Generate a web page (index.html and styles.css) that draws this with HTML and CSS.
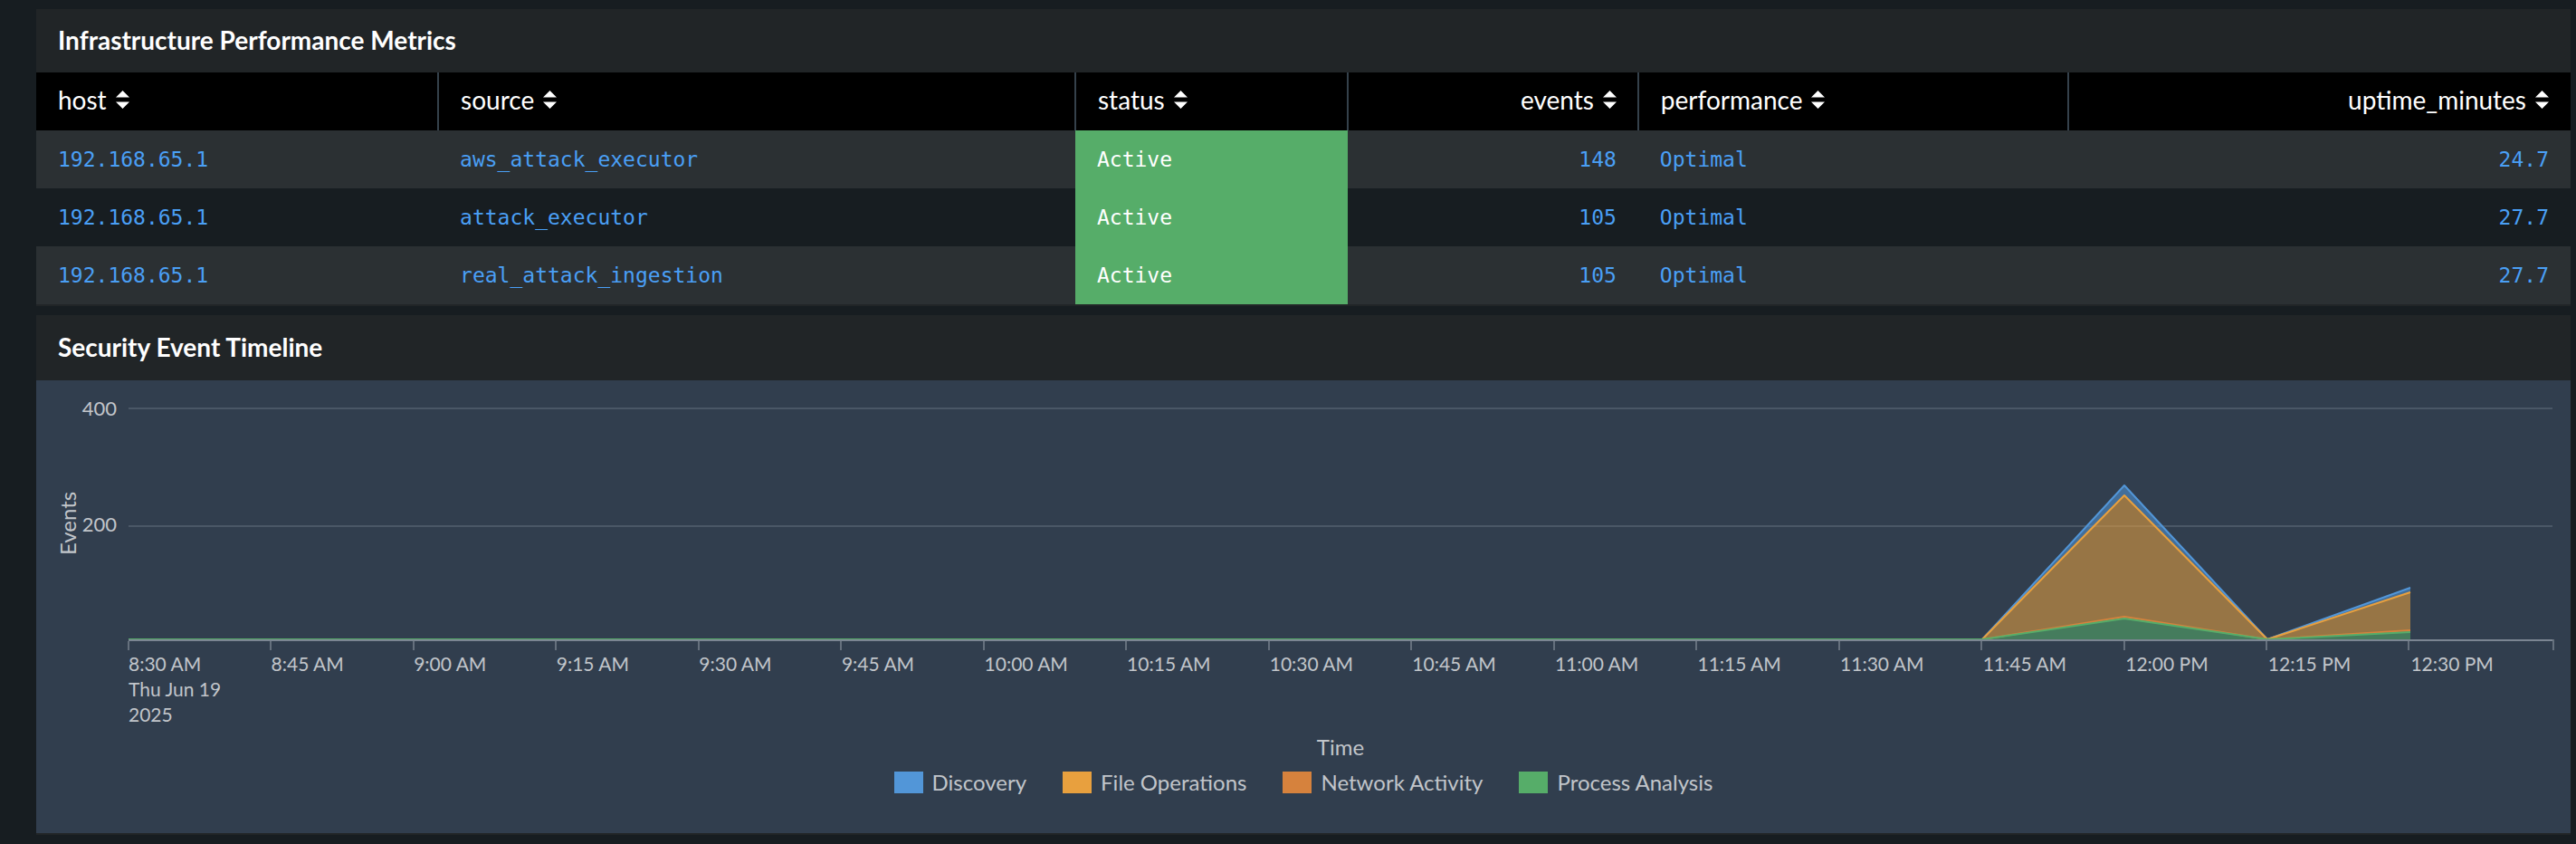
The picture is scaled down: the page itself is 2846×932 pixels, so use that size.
FILE: index.html
```html
<!DOCTYPE html>
<html lang="en">
<head>
<meta charset="utf-8">
<title>Infrastructure Performance Metrics</title>
<link rel="stylesheet" href="styles.css">
</head>
<body>
<svg class="defs" width="0" height="0" aria-hidden="true">
  <symbol id="sort" viewBox="0 0 15 20"><path d="M7.500 0 15 7.500H0zM7.500 20 0 12.500h15z" fill="currentColor"/></symbol>
</svg>
<main class="dashboard">
  <section class="panel">
    <h2 class="panel-title">Infrastructure Performance Metrics</h2>
    <table class="metrics">
      <colgroup><col class="c-host"><col class="c-source"><col class="c-status"><col class="c-events"><col class="c-perf"><col class="c-uptime"></colgroup>
      <thead>
        <tr>
          <th scope="col"><button type="button">host<svg class="sort"><use href="#sort"/></svg></button></th>
          <th scope="col"><button type="button">source<svg class="sort"><use href="#sort"/></svg></button></th>
          <th scope="col"><button type="button">status<svg class="sort"><use href="#sort"/></svg></button></th>
          <th scope="col" class="num"><button type="button">events<svg class="sort"><use href="#sort"/></svg></button></th>
          <th scope="col"><button type="button">performance<svg class="sort"><use href="#sort"/></svg></button></th>
          <th scope="col" class="num"><button type="button">uptime_minutes<svg class="sort"><use href="#sort"/></svg></button></th>
        </tr>
      </thead>
      <tbody>
        <tr><td>192.168.65.1</td><td>aws_attack_executor</td><td class="active">Active</td><td class="num">148</td><td>Optimal</td><td class="num">24.7</td></tr>
        <tr><td>192.168.65.1</td><td>attack_executor</td><td class="active">Active</td><td class="num">105</td><td>Optimal</td><td class="num">27.7</td></tr>
        <tr><td>192.168.65.1</td><td>real_attack_ingestion</td><td class="active">Active</td><td class="num">105</td><td>Optimal</td><td class="num">27.7</td></tr>
      </tbody>
    </table>
  </section>

  <section class="panel">
    <h2 class="panel-title panel-title-tall">Security Event Timeline</h2>
    <div class="chart">
      <div class="y-title">Events</div>
      <div class="y-labels"><span>400</span><span>200</span></div>
      <svg class="plot" viewBox="0 0 2680 268" preserveAspectRatio="none" role="img" aria-label="Events over time">
        <path class="grid" d="M1 1H2679M1 131H2679"/>
        <path class="fill discovery" d="M2049 256 2206 86 2364 256 2522 199V204L2364 256 2206 97z"/>
        <path class="fill file" d="M2049 256 2206 97 2364 256 2522 204V246L2364 256 2206 231z"/>
        <path class="fill network" d="M2049 256 2206 231 2364 256 2522 246V248L2364 256 2206 233z"/>
        <path class="fill process" d="M2049 256 2206 233 2364 256 2522 248V256z"/>
        <path class="line discovery" d="M1 256H2049L2206 86 2364 256 2522 199"/>
        <path class="line file" d="M1 256H2049L2206 97 2364 256 2522 204"/>
        <path class="line network" d="M1 256H2049L2206 231 2364 256 2522 246"/>
        <path class="line process" d="M1 256H2049L2206 233 2364 256 2522 248"/>
        <path class="axis" d="M1 257H2679"/>
        <path class="tick" d="M1 258V268M158 258V268M316 258V268M473 258V268M631 258V268M788 258V268M946 258V268M1103 258V268M1261 258V268M1418 258V268M1576 258V268M1733 258V268M1891 258V268M2048 258V268M2206 258V268M2363 258V268M2520 258V268M2680 256V268"/>
      </svg>
      <div class="x-labels">
        <span>8:30 AM<br>Thu Jun 19<br>2025</span><span>8:45 AM</span><span>9:00 AM</span><span>9:15 AM</span><span>9:30 AM</span><span>9:45 AM</span><span>10:00 AM</span><span>10:15 AM</span><span>10:30 AM</span><span>10:45 AM</span><span>11:00 AM</span><span>11:15 AM</span><span>11:30 AM</span><span>11:45 AM</span><span>12:00 PM</span><span>12:15 PM</span><span>12:30 PM</span>
      </div>
      <div class="x-title">Time</div>
      <ul class="legend">
        <li><i class="swatch discovery"></i>Discovery</li>
        <li><i class="swatch file"></i>File Operations</li>
        <li><i class="swatch network"></i>Network Activity</li>
        <li><i class="swatch process"></i>Process Analysis</li>
      </ul>
    </div>
  </section>
</main>
</body>
</html>
```

FILE: styles.css
```css
* { box-sizing: border-box; }
body {
  margin: 0;
  background: #171d21;
  color: #fff;
  font-family: Lato, "Liberation Sans", sans-serif;
}
.defs { position: absolute; }
.dashboard {
  display: flex;
  flex-direction: column;
  gap: 10px;
  padding: 10px 6px 10px 40px;
}
.panel { background: #212527; padding-bottom: 2px; }
.panel-title {
  margin: 0;
  padding: 0 24px 2px;
  font-size: 28px;
  font-weight: 700;
  line-height: 68px;
}
.panel-title-tall { line-height: 70px; }

.metrics {
  width: 100%;
  table-layout: fixed;
  border-collapse: collapse;
}
.c-host { width: 15.86%; }
.c-source { width: 25.14%; }
.c-status { width: 10.75%; }
.c-events { width: 11.46%; }
.c-perf { width: 16.97%; }
.c-uptime { width: 19.82%; }
.metrics th {
  height: 64px;
  padding: 0 23px 0 24px;
  background: #000;
  border-right: 2px solid #35414b;
  text-align: left;
  font-weight: 400;
}
.metrics th:last-child { border-right: 0; padding-right: 24px; }
.metrics th button {
  display: inline-flex;
  align-items: center;
  gap: 10px;
  padding: 0 0 4px;
  border: 0;
  background: none;
  color: inherit;
  font: inherit;
  font-size: 28px;
  line-height: 32px;
  cursor: pointer;
}
.sort { width: 15px; height: 20px; }
.metrics td {
  height: 64px;
  padding: 0 24px 1px;
  color: #4a9ff5;
  font: 23px/32px "DejaVu Sans Mono", monospace;
}
.metrics tbody tr:nth-child(odd) { background: #2b3033; }
.metrics tbody tr:nth-child(even) { background: #171d21; }
.metrics td.active { background: #56ad69; color: #fff; }
.metrics th.num, .metrics td.num { text-align: right; }

.chart {
  display: grid;
  grid-template-columns: 48px 42px 1fr;
  padding: 30px 19px 42px 11px;
  background: #313e4e;
  color: #c1c5ca;
  font-size: 21px;
  line-height: 28px;
}
.y-title {
  height: 256px;
  writing-mode: vertical-rl;
  transform: rotate(180deg);
  text-align: center;
  font-size: 24px;
  justify-self: center;
}
.y-labels {
  display: flex;
  flex-direction: column;
  gap: 100px;
  margin-top: -13px;
  padding-right: 12px;
  align-items: flex-end;
  font-size: 22px;
}
.plot { display: block; width: 100%; height: 268px; overflow: visible; }
.plot path { vector-effect: non-scaling-stroke; stroke-width: 2; fill: none; }
.plot .grid { stroke: #4a5766; }
.plot .axis { stroke: #7b8592; }
.plot .tick { stroke: #65707d; }
.discovery { --series: #5296d8; }
.file { --series: #e8a03e; }
.network { --series: #d6823d; }
.process { --series: #56ad69; }
.plot .fill { fill: var(--series); fill-opacity: 0.56; stroke: none; }
.plot .line { stroke: var(--series); stroke-linejoin: round; }
.x-labels {
  grid-column: 3;
  display: grid;
  grid-template-columns: repeat(17, 1fr);
  margin-top: 1px;
  padding-left: 1px;
  white-space: nowrap;
}
.x-title {
  grid-column: 3;
  margin-top: 8px;
  text-align: center;
  font-size: 24px;
}
.legend {
  grid-column: 1 / -1;
  display: flex;
  justify-content: center;
  gap: 40px;
  margin: 11px 0 0;
  padding: 0 0 0 8px;
  list-style: none;
  font-size: 24px;
}
.legend li { display: flex; gap: 10px; }
.swatch { width: 32px; height: 24px; margin-top: 2px; background: var(--series); }
```
